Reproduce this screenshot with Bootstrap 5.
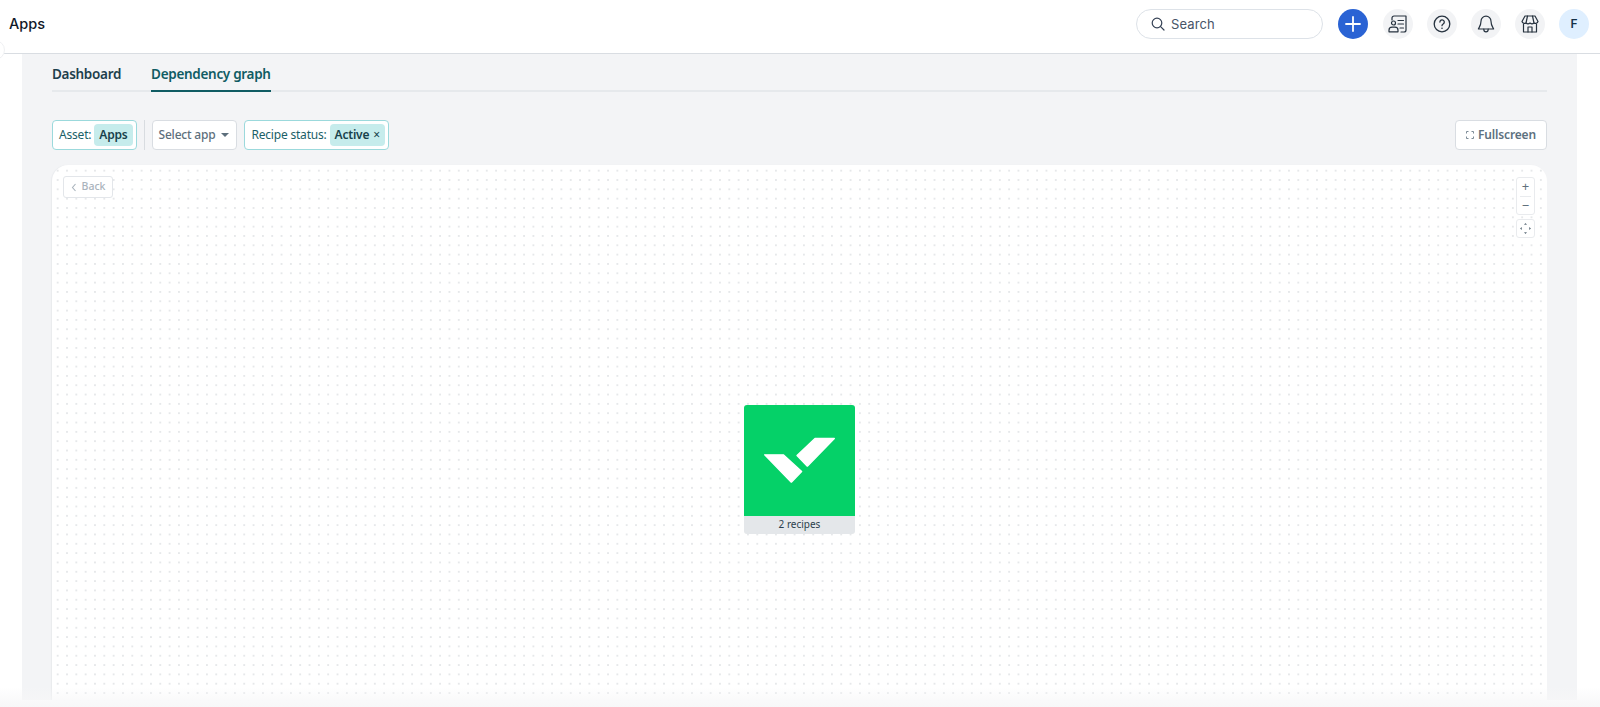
<!DOCTYPE html>
<html lang="en">
<head>
    <meta charset="UTF-8">
    <title>Apps - Dependency graph</title>
    <link href="https://cdn.jsdelivr.net/npm/bootstrap@5.3.2/dist/css/bootstrap.min.css" rel="stylesheet">
    <script src="https://cdn.jsdelivr.net/npm/bootstrap@5.3.2/dist/js/bootstrap.bundle.min.js"></script>
    <style>
        html, body {
            height: 707px;
            overflow: hidden;
        }
        body {
            background: #fff;
            font-family: "Noto Sans", sans-serif;
            color: #17313b;
        }
        #topbar {
            height: 54px;
            padding: 0 11px 6px 9px;
            border-bottom: 1px solid #d9dde2;
        }
        #topbar h1 {
            font: 500 14.5px Inter, sans-serif;
            color: #101828;
            margin: 0;
        }
        .side-notch {
            position: absolute;
            left: -15px;
            top: 40px;
            width: 20px;
            height: 20px;
            border: 1px solid #f0f1f3;
            border-radius: 50%;
            background: #fff;
        }
        .search-box {
            width: 187px;
            height: 30px;
            border: 1px solid #dde2e8;
            border-radius: 15px;
            padding-left: 14px;
            gap: 6px;
            font: 400 13px Inter, sans-serif;
            letter-spacing: .1px;
            color: #475467;
        }
        .round-btn {
            width: 30px;
            height: 30px;
            border-radius: 50%;
            background: #f2f3f5;
            color: #26323f;
            flex-shrink: 0;
            margin-left: 14px;
        }
        .round-btn.add-btn { background: #2a63d4; margin-left: 15px; }
        .round-btn.add-btn + .round-btn { margin-left: 15px; }
        .round-btn.user-btn { background: #dfefff; font: 600 12px Inter, sans-serif; color: #14324a; }
        #page {
            height: 646px;
            margin: 0 23px 0 22px;
            padding: 0 30px;
            background: #f3f4f6;
        }
        .tab-row {
            height: 38px;
            gap: 30px;
            border-bottom: 2px solid #e6e9ec;
            font-size: 13.5px;
            font-weight: 600;
            letter-spacing: -.3px;
        }
        .tab-row a {
            height: 38px;
            margin-bottom: -2px;
            padding-top: 10px;
            color: #1d3f4d;
            text-decoration: none;
        }
        .tab-row a.active {
            color: #0f5c63;
            border-bottom: 2px solid #0f5c63;
        }
        .filter-row {
            height: 30px;
            margin-top: 28px;
            font-size: 12px;
            letter-spacing: -.2px;
        }
        .filter-chip {
            height: 30px;
            padding: 0 3px 0 6px;
            gap: 3px;
            background: #fff;
            border: 1px solid #9bd9dc;
            border-radius: 4px;
            color: #1b5f68;
        }
        .filter-chip b {
            height: 22px;
            padding: 0 5px;
            border-radius: 4px;
            background: #c6ecec;
            color: #17414b;
            font-weight: 600;
            display: flex;
            align-items: center;
            gap: 4px;
        }
        .filter-chip b i {
            font-style: normal;
            font-weight: 400;
        }
        .filter-sep {
            width: 1px;
            height: 30px;
            background: #d8dce0;
            margin: 0 7px;
        }
        .select-chip {
            height: 30px;
            padding: 0 7px 0 6px;
            gap: 6px;
            margin-right: 7px;
            background: #fff;
            border: 1px solid #d9dde2;
            border-radius: 4px;
            color: #5d6f7c;
            font-weight: 500;
        }
        .select-caret {
            width: 0;
            height: 0;
            border-left: 4px solid transparent;
            border-right: 4px solid transparent;
            border-top: 4px solid #5d6f7c;
        }
        .full-btn {
            width: 92px;
            height: 30px;
            padding: 0;
            gap: 4px;
            background: #fff;
            border: 1px solid #d9dde2;
            border-radius: 4px;
            color: #5d7180;
            font-size: 12px;
            font-weight: 600;
            letter-spacing: -.15px;
        }
        #canvas {
            position: relative;
            height: 535px;
            margin-top: 15px;
            border-radius: 16px 16px 0 0;
            background-color: #fff;
            background-image: radial-gradient(circle, #e6e8ea .7px, transparent 1px);
            background-size: 9.33px 9.33px;
            background-position: 1px 1px;
            box-shadow: -1px 0 1px #e9ebee;
        }
        .back-btn {
            position: absolute;
            left: 11px;
            top: 11px;
            width: 50px;
            height: 22px;
            gap: 5px;
            background: #fff;
            border: 1px solid #e3e6ea;
            border-radius: 3px;
            color: #a9b3bc;
            font-size: 10.5px;
            font-weight: 500;
        }
        .zoom-ctl {
            position: absolute;
            right: 12px;
            width: 19px;
            background: #fff;
            border: 1px solid #e9ebee;
            border-radius: 3px;
            color: #60707c;
        }
        .zoom-ctl.zoom-pm { top: 12px; height: 38px; }
        .zoom-ctl.zoom-fit { top: 54px; height: 19px; }
        .zoom-ctl span {
            height: 18px;
            line-height: 17px;
            font-size: 13px;
            text-align: center;
        }
        .zoom-ctl span + span { border-top: 1px solid #e9ebee; margin: 0 3px; }
        .app-node {
            position: absolute;
            left: 692px;
            top: 240px;
            width: 111px;
            border-radius: 3px;
            overflow: hidden;
        }
        .app-node .node-logo {
            height: 111px;
            background: #05d168;
        }
        .app-node .node-foot {
            height: 18px;
            line-height: 17px;
            background: #e4e7ea;
            text-align: center;
            font-size: 10px;
            color: #2b3f4c;
        }
        #bottom-fade {
            position: absolute;
            left: 0;
            right: 0;
            bottom: 0;
            height: 20px;
            background: linear-gradient(rgba(248,248,249,0), #f7f7f8);
        }
    </style>
</head>
<body>

<header id="topbar" class="d-flex align-items-center position-relative">
    <h1>Apps</h1>
    <div class="search-box d-flex align-items-center ms-auto">
        <svg width="14" height="14" viewBox="0 0 14 14" fill="none" stroke="#344054" stroke-width="1.2" stroke-linecap="round"><circle cx="6" cy="6" r="4.8"/><path d="M9.6 9.6 13 13"/></svg>
        Search
    </div>
    <div class="round-btn add-btn d-flex align-items-center justify-content-center">
        <svg width="16" height="16" viewBox="0 0 16 16" stroke="#fff" stroke-width="1.8" stroke-linecap="round"><path d="M8 1v14M1 8h14"/></svg>
    </div>
    <div class="round-btn d-flex align-items-center justify-content-center">
        <svg width="20" height="18" viewBox="0 0 20 18" fill="none" stroke="#26323f" stroke-width="1.2" stroke-linecap="round" stroke-linejoin="round"><path d="M4 5V3a2 2 0 0 1 2-2h12v14a2 2 0 0 1-2 2h-3"/><path d="M10 5.5h5.5M10 9h5.5M12 13h3.5"/><circle cx="5.5" cy="8" r="2"/><path d="M1 16.8v-1.6a3 3 0 0 1 3-3h3a3 3 0 0 1 3 3v1.6z"/></svg>
    </div>
    <div class="round-btn d-flex align-items-center justify-content-center">
        <svg width="18" height="18" viewBox="0 0 18 18" fill="none" stroke="#26323f" stroke-width="1.3" stroke-linecap="round"><circle cx="9" cy="9" r="7.8"/><path d="M6.9 7a2.2 2.2 0 1 1 3.3 2c-.8.5-1.2.9-1.2 1.7"/><path d="M9 13.2v.1" stroke-width="1.6"/></svg>
    </div>
    <div class="round-btn d-flex align-items-center justify-content-center">
        <svg width="18" height="18" viewBox="0 0 18 18" fill="none" stroke="#26323f" stroke-width="1.2" stroke-linecap="round" stroke-linejoin="round"><path d="M9 1.2a5 5 0 0 0-5 5c0 4.5-2.2 6.6-2.6 7.8h15.2C16.200 12.800 14 10.700 14 6.200a5 5 0 0 0-5-5z"/><path d="M6.800 14.200c0 1.600 1 2.600 2.200 2.600s2.200-1 2.200-2.600"/></svg>
    </div>
    <div class="round-btn d-flex align-items-center justify-content-center">
        <svg width="18" height="18" viewBox="0 0 18 18" fill="none" stroke="#26323f" stroke-width="1.2" stroke-linecap="round" stroke-linejoin="round"><path d="M4 1h10l3 5.500a2.700 2.700 0 0 1-4 1.500 3.200 3.200 0 0 1-4 0 3.200 3.200 0 0 1-4 0 2.700 2.700 0 0 1-4-1.500z"/><path d="M6.500 1 5 8M11.500 1 13 8M2.500 9v8h13V9"/><path d="M7 17v-5h4v5"/></svg>
    </div>
    <div class="round-btn user-btn d-flex align-items-center justify-content-center">F</div>
    <span class="side-notch"></span>
</header>

<main id="page">
    <nav class="tab-row d-flex">
        <a href="#">Dashboard</a>
        <a href="#" class="active">Dependency graph</a>
    </nav>

    <div class="filter-row d-flex align-items-center">
        <div class="filter-chip d-flex align-items-center">Asset: <b>Apps</b></div>
        <span class="filter-sep"></span>
        <div class="select-chip d-flex align-items-center">Select app <span class="select-caret"></span></div>
        <div class="filter-chip d-flex align-items-center">Recipe status: <b>Active <i>×</i></b></div>
        <button class="btn full-btn d-flex align-items-center justify-content-center ms-auto">
            <svg width="8" height="8" viewBox="0 0 8 8" fill="none" stroke="#7c8b97" stroke-width="1"><path d="M.5 2.500V.5h2M5.500.5h2v2M7.500 5.500v2h-2M2.500 7.500h-2v-2"/></svg>
            Fullscreen
        </button>
    </div>

    <div id="canvas">
        <div class="back-btn d-flex align-items-center justify-content-center">
            <svg width="6" height="9" viewBox="0 0 6 9" fill="none" stroke="#a9b3bc" stroke-width="1.100"><path d="M4.500 1 1.500 4.500l3 3.500"/></svg>
            Back
        </div>
        <div class="zoom-ctl zoom-pm d-flex flex-column">
            <span>+</span>
            <span>−</span>
        </div>
        <div class="zoom-ctl zoom-fit d-flex align-items-center justify-content-center">
            <svg width="11" height="11" viewBox="0 0 11 11" fill="#60707c"><path d="M5.500 0 7 1.800H4zM5.500 11 4 9.200h3zM0 5.500 1.800 4v3zM11 5.500 9.200 7V4z"/></svg>
        </div>
        <div class="app-node">
            <div class="node-logo">
                <svg width="111" height="111" viewBox="72 46 333 332" fill="#fff" stroke="#fff" stroke-width="4" stroke-linejoin="round"><path d="M285 146h58l-81 83-31-32zM134 195h56l55 50-31 32z"/></svg>
            </div>
            <div class="node-foot">2 recipes</div>
        </div>
    </div>
</main>

<div id="bottom-fade"></div>

</body>
</html>
